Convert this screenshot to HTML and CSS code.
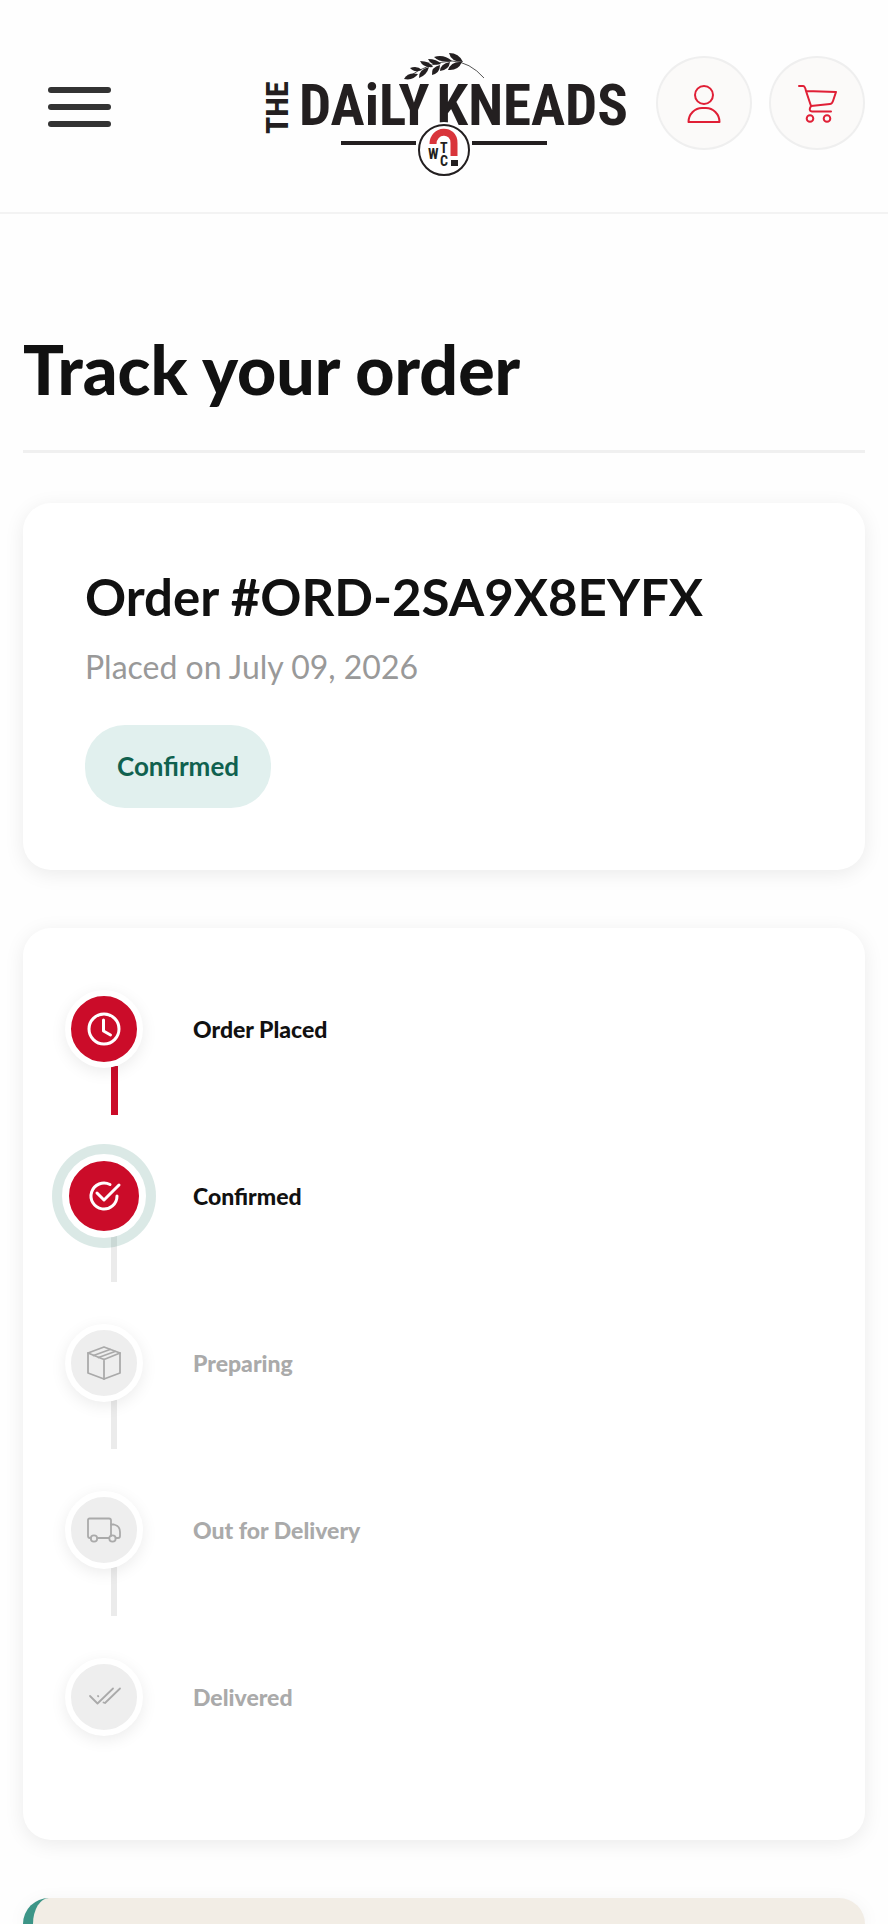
FILE: index.html
```html
<!DOCTYPE html>
<html lang="en">
<head>
    <meta charset="utf-8">
    <meta name="viewport" content="width=device-width, initial-scale=1">
    <title>Track your order</title>
    <link rel="stylesheet" href="styles.css">
</head>
<body>
    <header class="site-header">
        <button class="menu-btn" type="button" aria-label="Menu">
            <span></span>
            <span></span>
            <span></span>
        </button>
        <a class="logo" href="#" aria-label="The Daily Kneads">
            <svg width="388" height="142" viewBox="250 36 388 142">
                <!-- wheat branch -->
                <path d="M484 78 Q470 62 452 61 Q430 62 408 77" fill="none" stroke="#555" stroke-width="1"/>
                <g fill="#231f20">
                    <path d="M463 62 Q451 62 449 53 Q459 53 463 62z"/>
                    <path d="M452 61 Q440 63 434 57 Q444 54 452 61z"/>
                    <path d="M441 64 Q432 67 428 59 Q437 59 441 64z"/>
                    <path d="M433 67 Q423 68 420 61 Q430 61 433 67z"/>
                    <path d="M422 70 Q414 73 410 68 Q417 65 422 70z"/>
                    <path d="M462 62 Q451 61 448 70 Q458 71 462 62z"/>
                    <path d="M450 62 Q440 64 440 71 Q449 70 450 62z"/>
                    <path d="M440 65 Q431 67 432 75 Q440 73 440 65z"/>
                    <path d="M429 67 Q418 70 419 78 Q427 75 429 67z"/>
                    <path d="M418 74 Q408 72 404 79 Q413 81 418 74z"/>
                </g>
                <text class="logo-the" transform="translate(288 134) rotate(-90)">THE</text>
                <text class="logo-word" x="299" y="125">DAiLY</text>
                <text class="logo-word" x="628" y="125" text-anchor="end">KNEADS</text>
                <path d="M341 143h75M472 143h75" stroke="#231f20" stroke-width="4"/>
                <circle cx="444" cy="150" r="28" fill="#fff"/>
                <circle cx="444" cy="150" r="25" fill="#fff" stroke="#231f20" stroke-width="2"/>
                <path d="M433 144 C433 129 454 128 454 143 V156" fill="none" stroke="#d9353b" stroke-width="7"/>
                <path d="M451 160h7v6h-7z" fill="#231f20"/>
                <text class="logo-mark" x="428" y="159">W</text>
                <text class="logo-mark" x="440" y="153">T</text>
                <text class="logo-mark" x="440" y="166">C</text>
            </svg>
        </a>
        <div class="header-actions">
            <a class="round-btn" href="#" aria-label="Account">
                <svg width="48" height="48" viewBox="0 0 48 48" stroke-width="2">
                    <circle cx="24" cy="16" r="9"/>
                    <path d="M8.500 43 H39.500 C39.500 35 33 29 26 29 H22 C15 29 8.500 35 8.500 43z"/>
                </svg>
            </a>
            <a class="round-btn" href="#" aria-label="Cart">
                <svg width="48" height="48" viewBox="0 0 48 48" stroke-width="2">
                    <path d="M6 7 H10 Q12 7 13 12 L18 27 L37 25 Q39 25 40 22 L43 13 L13 12"/>
                    <path d="M18 27 Q15 32 19 32.500 H38"/>
                    <circle cx="17" cy="39.500" r="3.300"/>
                    <circle cx="34" cy="39.500" r="3.300"/>
                </svg>
            </a>
        </div>
    </header>

    <main class="page">
        <h1 class="page-title">Track your order</h1>

        <section class="card order-card">
            <h2 class="order-number">Order #ORD-2SA9X8EYFX</h2>
            <p class="order-date">Placed on July 09, 2026</p>
            <span class="status-badge">Confirmed</span>
        </section>

        <section class="card">
            <ol class="timeline">
                <li class="step done">
                    <span class="step-icon">
                        <svg width="36" height="36" viewBox="0 0 36 36" stroke-width="3">
                            <circle cx="18" cy="18" r="15"/>
                            <path d="M17.500 9 V20 L24.500 24"/>
                        </svg>
                    </span>
                    <span class="step-label">Order Placed</span>
                </li>
                <li class="step current">
                    <span class="step-icon">
                        <svg width="36" height="36" viewBox="0 0 36 36" stroke-width="3">
                            <path d="M24 6.500 A13 13 0 1 0 31 18"/>
                            <path d="M11 15 L18 22 L33 7"/>
                        </svg>
                    </span>
                    <span class="step-label">Confirmed</span>
                </li>
                <li class="step">
                    <span class="step-icon">
                        <svg width="36" height="36" viewBox="0 0 36 36" stroke-width="1.800">
                            <path d="M18 2 L34 8 V28 L18 34 L2 28 V8z"/>
                            <path d="M2 8 L18 14.500 L34 8 M18 14.500 V34"/>
                            <path d="M7.500 10.500 L24 4.500 M12.500 12.500 L29 6.500"/>
                        </svg>
                    </span>
                    <span class="step-label">Preparing</span>
                </li>
                <li class="step">
                    <span class="step-icon">
                        <svg width="36" height="36" viewBox="0 0 36 36" stroke-width="1.800">
                            <path d="M5 26 H4 Q2 26 2 24 V8 Q2 6.500 3.500 6.500 H23 Q25 6.500 25 8.500 V24 M11 26 H23"/>
                            <path d="M25 12.500 H28 Q34 14 34 20 V24 Q34 26 32 26 H29.500"/>
                            <circle cx="8" cy="26.500" r="3.200"/>
                            <circle cx="26.500" cy="26.500" r="3.200"/>
                        </svg>
                    </span>
                    <span class="step-label">Out for Delivery</span>
                </li>
                <li class="step">
                    <span class="step-icon">
                        <svg width="36" height="36" viewBox="0 0 36 36" stroke-width="1.800">
                            <path d="M4 17 L11.500 24.500 L27 9.500"/>
                            <path d="M12 17 L12.300 17.300 M17.500 23.500 L19 24 L34 9.500"/>
                        </svg>
                    </span>
                    <span class="step-label">Delivered</span>
                </li>
            </ol>
        </section>

        <section class="notice"></section>
    </main>
</body>
</html>
```
FILE: styles.css
```css
* {
    box-sizing: border-box;
}

body {
    margin: 0;
    min-height: 100vh;
    display: flex;
    flex-direction: column;
    background-color: #fefefe;
    color: #111;
    font-family: Lato, "Open Sans", sans-serif;
}

h1, h2, p {
    margin: 0;
}

svg {
    display: block;
}

/* header */
.site-header {
    display: grid;
    grid-template-columns: 1fr auto 1fr;
    align-items: center;
    padding: 36px 23px 34px;
    border-bottom: 2px solid #f3f3f3;
}

.menu-btn {
    display: flex;
    flex-direction: column;
    gap: 11px;
    width: 63px;
    margin-left: 25px;
    padding: 0;
    border: 0;
    background: none;
}

.menu-btn span {
    height: 6px;
    border-radius: 3px;
    background-color: #333;
}

.logo-word, .logo-the, .logo-mark {
    fill: #231f20;
    font-family: "Roboto Condensed", Roboto, sans-serif;
    font-weight: bold;
}

.logo-word {
    font-size: 57px;
}

.logo-the {
    font-size: 32px;
}

.logo-mark {
    font-size: 14px;
}

.header-actions {
    display: flex;
    justify-content: flex-end;
    gap: 17px;
    padding-bottom: 8px;
}

.round-btn {
    display: flex;
    align-items: center;
    justify-content: center;
    width: 96px;
    height: 94px;
    border: 2px solid #efefef;
    border-radius: 50%;
    background-color: #fbfaf9;
}

.round-btn svg {
    fill: none;
    stroke: #e01f36;
    stroke-linecap: round;
    stroke-linejoin: round;
}

/* content */
.page {
    flex: 1;
    display: flex;
    flex-direction: column;
    padding: 117px 23px 0;
}

.page-title {
    margin-bottom: 50px;
    padding-bottom: 43px;
    border-bottom: 3px solid #f0f0f0;
    font-size: 68px;
    line-height: 76px;
    font-weight: 900;
}

.card {
    margin-bottom: 58px;
    padding: 62px 42px 15px;
    border-radius: 28px;
    background-color: #fff;
    box-shadow: 0 4px 20px rgba(0, 0, 0, 0.08);
}

.order-card {
    padding: 62px;
}

.order-number {
    font-size: 51px;
    line-height: 64px;
}

.order-date {
    margin: 16px 0 36px;
    color: #999;
    font-size: 32px;
    line-height: 44px;
}

.status-badge {
    display: inline-block;
    padding: 26px 32px;
    border-radius: 40px;
    background-color: #e1f0ee;
    color: #10614f;
    font-size: 26px;
    line-height: 31px;
    font-weight: bold;
}

.timeline {
    margin: 0;
    padding: 0;
    list-style: none;
}

.step {
    position: relative;
    display: flex;
    align-items: flex-start;
    gap: 50px;
    height: 167px;
}

/* connector to the next step */
.step::before {
    content: "";
    position: absolute;
    top: 76px;
    left: 46px;
    width: 6px;
    height: 49px;
    background-color: #ebebeb;
}

.step:last-child::before {
    display: none;
}

.step.done::before {
    width: 7px;
    background-color: #cb0c29;
}

.step-icon {
    position: relative;
    display: flex;
    align-items: center;
    justify-content: center;
    width: 78px;
    height: 78px;
    border: 6px solid #fff;
    border-radius: 50%;
    background-color: #eee;
    color: #aaa;
    box-shadow: 0 4px 16px rgba(0, 0, 0, 0.08);
}

.step-icon svg {
    fill: none;
    stroke: currentColor;
    stroke-linecap: round;
    stroke-linejoin: round;
}

.step.done .step-icon,
.step.current .step-icon {
    background-color: #cb0c29;
    color: #fff;
}

.step.current .step-icon {
    width: 84px;
    height: 84px;
    margin: -3px;
    border-width: 7px;
    box-shadow: 0 0 0 10px rgba(16, 110, 85, 0.15);
}

.step-label {
    color: #aaa;
    font-size: 23px;
    line-height: 78px;
    font-weight: 900;
}

.step.done .step-label,
.step.current .step-label {
    color: #111;
}

.notice {
    flex: 1;
    min-height: 25px;
    border-left: 10px solid #3c9587;
    border-radius: 32px 32px 0 0;
    background-color: #f2ede5;
    box-shadow: 0 4px 20px rgba(0, 0, 0, 0.06);
}
```
